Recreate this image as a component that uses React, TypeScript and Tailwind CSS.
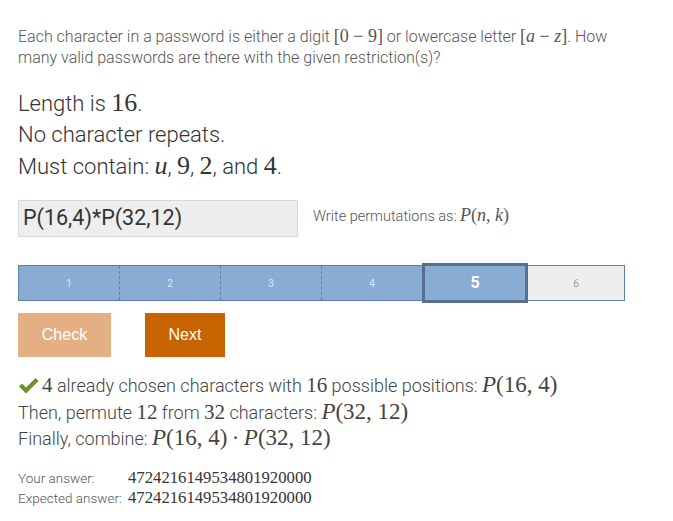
const roboto = { fontFamily: 'Roboto, "Liberation Sans", sans-serif' };
const serif = { fontFamily: '"Liberation Serif", "DejaVu Serif", serif' };

function M({ children, i, c = '' }: { children: React.ReactNode; i?: boolean; c?: string }) {
  return (
    <span className={'font-normal ' + (i ? 'italic ' : '') + c} style={serif}>
      {children}
    </span>
  );
}

function P({ n, k, c = '', vars }: { n: string; k: string; c?: string; vars?: boolean }) {
  return (
    <M c={c}>
      <span className="italic">P</span>(<span className={vars ? 'italic' : ''}>{n}</span>,{' '}
      <span className={vars ? 'italic' : ''}>{k}</span>)
    </M>
  );
}

export default function App() {
  return (
    <div className="min-h-[521px] bg-white px-[18px] pt-[26px] font-light text-[#444]" style={roboto}>
      <p className="text-[16px] leading-[21px] text-[#555]">
        Each character in a password is either a digit <M c="text-[18px]">[0 − 9]</M> or lowercase letter{' '}
        <M c="text-[18px]">
          [<span className="italic">a</span> − <span className="italic">z</span>]
        </M>
        . How
        <br />
        many valid passwords are there with the given restriction(s)?
      </p>

      <div className="mt-[19px] text-[22px] leading-[31px] text-[#333]">
        <div>
          Length is <M c="text-[26px]">16</M>.
        </div>
        <div>No character repeats.</div>
        <div>
          Must contain: <M i c="text-[26px]">u</M>, <M c="text-[26px]">9</M>, <M c="text-[26px]">2</M>, and{' '}
          <M c="text-[26px]">4</M>.
        </div>
      </div>

      <div className="mt-[18px] flex items-start gap-[15px]">
        <div className="flex h-[37px] w-[280px] items-center border border-[#d3d9de] bg-[#eeeeee] px-[4px] text-[21.5px] font-normal text-[#333]">
          P(16,4)*P(32,12)
        </div>
        <div className="pt-[2px] text-[14.5px] text-[#555]">
          Write permutations as: <P n="n" k="k" vars c="text-[18px]" />
        </div>
      </div>

      <div className="mt-[28px] flex h-[36px] w-[607px]">
        <div className="flex w-[404px] border-y border-l border-[#5b80aa] bg-[#88acd3] text-[10px] font-normal text-[#dde8f3]">
          {['1', '2', '3', '4'].map((s, idx) => (
            <div
              key={s}
              className={
                'flex flex-1 items-center justify-center ' + (idx > 0 ? 'border-l border-dashed border-[#5b80aa]' : '')
              }
            >
              {s}
            </div>
          ))}
        </div>
        <div className="relative z-10 -my-[2px] flex w-[106px] items-center justify-center border-[3px] border-[#566f91] bg-[#88acd3] text-[16px] font-bold text-white">
          5
        </div>
        <div className="flex w-[97px] items-center justify-center border-y border-r border-[#5b80aa] bg-[#eeeeee] text-[10px] font-normal text-[#999]">
          6
        </div>
      </div>

      <div className="mt-[12px] flex gap-[34px]">
        <button className="h-[44px] w-[93px] bg-[#e4b083] text-[16px] text-white" style={{ fontFamily: '"Liberation Sans", Arial, sans-serif' }}>
          Check
        </button>
        <button className="h-[44px] w-[80px] bg-[#c86400] text-[16px] text-white" style={{ fontFamily: '"Liberation Sans", Arial, sans-serif' }}>
          Next
        </button>
      </div>

      <div className="mt-[15px] text-[18px] leading-[25.5px] text-[#444]">
        <div className="flex items-center">
          <svg width="21" height="17" viewBox="0 0 21 17" className="mr-[3px]">
            <path d="M1 9.5 L4 6.5 L8 10.5 L17.5 1 L20.5 4 L8 16.5 Z" fill="#6f8f2b" />
          </svg>
          <span>
            <M c="text-[21px]">4</M> already chosen characters with <M c="text-[21px]">16</M> possible positions:{' '}
            <P n="16" k="4" c="text-[23px]" />
          </span>
        </div>
        <div>
          Then, permute <M c="text-[21px]">12</M> from <M c="text-[21px]">32</M> characters: <P n="32" k="12" c="text-[23px]" />
        </div>
        <div>
          Finally, combine: <P n="16" k="4" c="text-[23px]" /> <M c="text-[23px]">·</M> <P n="32" k="12" c="text-[23px]" />
        </div>
      </div>

      <div className="mt-[16px] grid grid-cols-[110px_auto] text-[13.5px] leading-[20px] text-[#555]">
        <div>Your answer:</div>
        <M c="text-[16.7px] text-[#333]">4724216149534801920000</M>
        <div>Expected answer:</div>
        <M c="text-[16.7px] text-[#333]">4724216149534801920000</M>
      </div>
    </div>
  );
}
